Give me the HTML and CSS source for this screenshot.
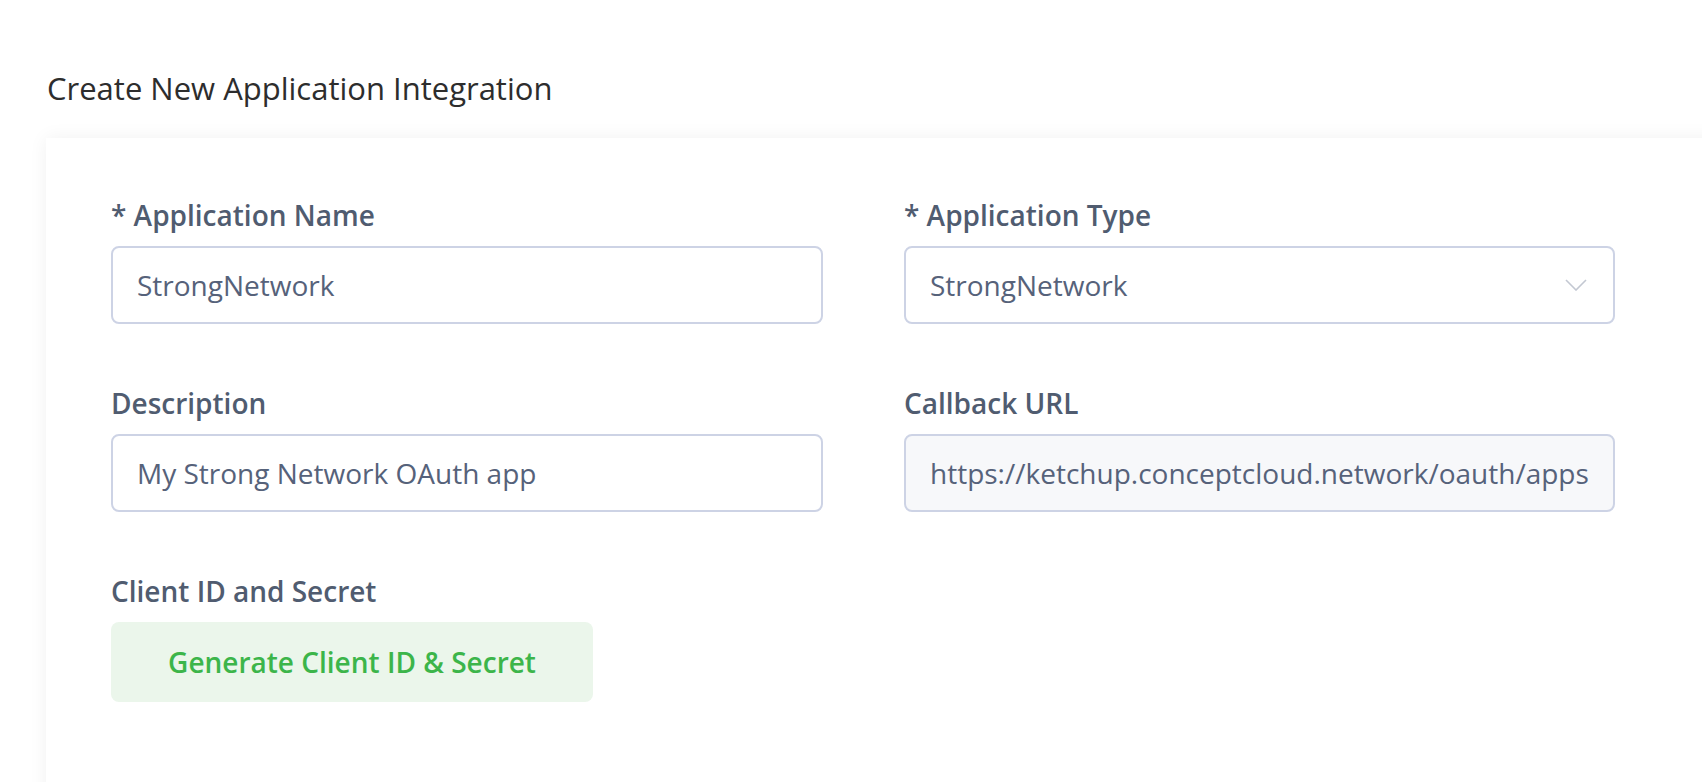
FILE: index.html
```html
<!DOCTYPE html>
<html lang="en">
<head>
<meta charset="utf-8">
<title>Create New Application Integration</title>
<link rel="stylesheet" href="styles.css">
</head>
<body>
<div class="page">
  <h1 class="title">Create New Application Integration</h1>
  <div class="card">
    <div class="grid">
      <div class="field">
        <label class="label">* Application Name</label>
        <div class="input">StrongNetwork</div>
      </div>
      <div class="field">
        <label class="label">* Application Type</label>
        <div class="input select">
          <span>StrongNetwork</span>
          <svg class="chev" width="22" height="12" viewBox="0 0 22 12"><path d="M1 1 L11 11 L21 1" fill="none" stroke="#c3c8d2" stroke-width="1.6"/></svg>
        </div>
      </div>
      <div class="field">
        <label class="label">Description</label>
        <div class="input">My Strong Network OAuth app</div>
      </div>
      <div class="field">
        <label class="label">Callback URL</label>
        <div class="input readonly"><span class="clip">https://ketchup.conceptcloud.network/oauth/apps/strongnetwork/callback</span></div>
      </div>
      <div class="field">
        <label class="label">Client ID and Secret</label>
        <button class="btn">Generate Client ID &amp; Secret</button>
      </div>
    </div>
  </div>
</div>
</body>
</html>
```
FILE: styles.css
```css
html, body {
  margin: 0;
  padding: 0;
  background: #ffffff;
  overflow: hidden;
  height: 100%;
}
body {
  font-family: "Open Sans", "Noto Sans", sans-serif;
}
.page {
  padding: 68px 0 0 46px;
}
.title {
  margin: 0 0 30px 1px;
  font-size: 31px;
  line-height: 40px;
  font-weight: 400;
  color: #2d2d2d;
  letter-spacing: 0;
}
.card {
  background: #fff;
  margin-right: -80px;
  height: 700px;
  box-shadow: 0 0 18px rgba(0, 0, 0, 0.06);
  padding: 57px 0 0 65px;
}
.grid {
  display: grid;
  grid-template-columns: 712px 711px;
  column-gap: 81px;
  row-gap: 59px;
}
.field {
  display: flex;
  flex-direction: column;
  align-items: flex-start;
}
.label {
  font-size: 28px;
  line-height: 40px;
  font-weight: 600;
  color: #505c70;
  margin-bottom: 11px;
}
.input {
  box-sizing: border-box;
  width: 100%;
  height: 78px;
  border: 2px solid #cdd3e5;
  border-radius: 8px;
  padding: 0 24px;
  display: flex;
  align-items: center;
  font-size: 28px;
  color: #56627a;
  background: #fff;
  white-space: nowrap;
  overflow: hidden;
}
.select {
  justify-content: space-between;
  padding-right: 26px;
}
.chev {
  display: block;
}
.readonly {
  background: #f7f8fa;
}
.clip {
  display: block;
  overflow: hidden;
  width: 100%;
}
.btn {
  box-sizing: border-box;
  width: 482px;
  height: 80px;
  border: none;
  border-radius: 8px;
  background: #ebf6eb;
  color: #3cb54a;
  font-family: "Open Sans", "Noto Sans", sans-serif;
  font-size: 28px;
  font-weight: 600;
  padding: 0;
  cursor: pointer;
}
```
